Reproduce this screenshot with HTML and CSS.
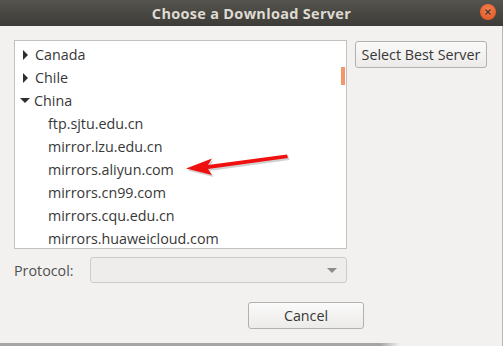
FILE: index.html
```html
<!DOCTYPE html>
<html lang="en">
<head>
  <meta charset="UTF-8">
  <title>Choose a Download Server</title>
  <link rel="stylesheet" href="styles.css">
</head>
<body>

  <!-- Title bar -->
  <div class="titlebar">
    <span class="title">Choose a Download Server</span>
    <span class="close">
      <svg width="16" height="16" viewBox="0 0 16 16">
        <path d="M5.5 5.5 L10.5 10.5 M10.5 5.5 L5.5 10.5" stroke="#3c3b37" stroke-width="1.2" fill="none"/>
      </svg>
    </span>
  </div>

  <!-- Dialog content -->
  <div class="dialog">
    <div class="main-row">
      <div class="server-list">
        <div class="row"><span class="expander closed"></span>Canada</div>
        <div class="row"><span class="expander closed"></span>Chile</div>
        <div class="row"><span class="expander open"></span>China</div>
        <div class="row child">ftp.sjtu.edu.cn</div>
        <div class="row child">mirror.lzu.edu.cn</div>
        <div class="row child">mirrors.aliyun.com</div>
        <div class="row child">mirrors.cn99.com</div>
        <div class="row child">mirrors.cqu.edu.cn</div>
        <div class="row child">mirrors.huaweicloud.com</div>
        <div class="scroll-indicator"></div>
      </div>
      <button class="button best">Select Best Server</button>
    </div>

    <div class="protocol-row">
      <span class="label">Protocol:</span>
      <div class="combo"><span class="combo-arrow"></span></div>
    </div>

    <div class="footer">
      <button class="button cancel">Cancel</button>
    </div>
  </div>

  <div class="bottom-shadow"></div>

  <!-- annotation arrow -->
  <svg class="annotation" width="503" height="346" viewBox="0 0 503 346">
    <polygon points="186,168.5 212,158.5 208,165 287,154.5 288,158 208,169 212,175" fill="#000" opacity="0.18" transform="translate(1.5,2)"/>
    <polygon points="186,168.5 212,158.5 208,165 287,154.5 288,158 208,169 212,175" fill="#f11010"/>
  </svg>

</body>
</html>
```

FILE: styles.css
```css
body {
  margin: 0;
  width: 503px;
  height: 346px;
  overflow: hidden;
  position: relative;
  background-color: #f2f1f0;
  font-family: "Open Sans", "Noto Sans", sans-serif;
  font-size: 14.3px;
  color: #383838;
}

.titlebar {
  height: 26px;
  background: linear-gradient(#56544e, #3c3b37);
  display: flex;
  align-items: center;
  justify-content: center;
  position: relative;
}

.title {
  color: #dfdbd2;
  font-weight: bold;
  font-size: 14.5px;
  letter-spacing: 0.3px;
}

.close {
  position: absolute;
  left: 480px;
  top: 4px;
  width: 16px;
  height: 16px;
  border-radius: 50%;
  background: radial-gradient(circle at 50% 35%, #f48050, #e0521c);
}

.close svg {
  display: block;
}

.dialog {
  height: 320px;
  border-right: 1px solid #b9b7b3;
  box-sizing: border-box;
  padding: 14px 0 0 14px;
}

.main-row {
  display: flex;
  align-items: flex-start;
  gap: 8px;
}

.server-list {
  position: relative;
  width: 333px;
  height: 209px;
  box-sizing: border-box;
  background-color: #fff;
  border: 1px solid #c4c1bd;
  padding-top: 2px;
  overflow: hidden;
}

.row {
  height: 23px;
  line-height: 23px;
  padding-left: 18px;
  display: flex;
  align-items: center;
  white-space: nowrap;
}

.row.child {
  padding-left: 33px;
}

.expander.closed {
  width: 0;
  height: 0;
  border-top: 5px solid transparent;
  border-bottom: 5px solid transparent;
  border-left: 5px solid #2e2e2e;
  margin-left: -10px;
  margin-right: 7px;
}

.expander.open {
  width: 0;
  height: 0;
  border-left: 5px solid transparent;
  border-right: 5px solid transparent;
  border-top: 5px solid #2e2e2e;
  margin-left: -13px;
  margin-right: 4px;
}

.scroll-indicator {
  position: absolute;
  right: 1px;
  top: 26px;
  width: 4px;
  height: 18px;
  background-color: #f4956a;
}

.button {
  font-family: inherit;
  font-size: 14.3px;
  color: #383838;
  height: 27px;
  padding: 0 6px;
  border: 1px solid #b4b1ac;
  border-radius: 3px;
  background: linear-gradient(#fafafa, #ecebe9);
  margin-top: 1px;
}

.best {
  width: 132px;
  padding: 0;
}

.protocol-row {
  display: flex;
  align-items: center;
  margin-top: 8px;
  height: 26px;
}

.label {
  width: 76px;
  color: #505050;
}

.combo {
  position: relative;
  width: 257px;
  height: 26px;
  box-sizing: border-box;
  border: 1px solid #cfccc7;
  border-radius: 3px;
  background-color: #eeedeb;
}

.combo-arrow {
  position: absolute;
  right: 9px;
  top: 10px;
  border-left: 5px solid transparent;
  border-right: 5px solid transparent;
  border-top: 5px solid #8e8c89;
}

.footer {
  display: flex;
  margin-top: 19px;
  padding-left: 234px;
}

.cancel {
  width: 116px;
  margin-top: 0;
}

.bottom-shadow {
  position: absolute;
  left: 0;
  bottom: 0;
  width: 400px;
  height: 3px;
  background: linear-gradient(90deg, #a6a5a3 95%, #f2f1f0);
}

.annotation {
  position: absolute;
  left: 0;
  top: 0;
  pointer-events: none;
}
```
